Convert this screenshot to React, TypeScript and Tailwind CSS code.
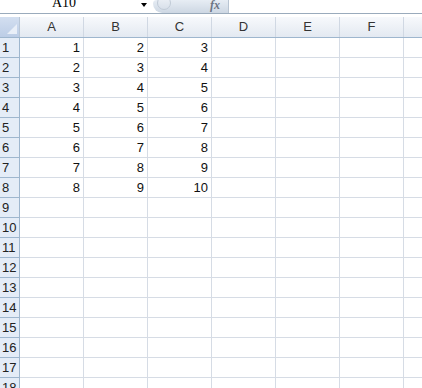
import React from 'react'

const columns = ['A', 'B', 'C', 'D', 'E', 'F', '']
const data: Record<number, number[]> = {
  1: [1, 2, 3],
  2: [2, 3, 4],
  3: [3, 4, 5],
  4: [4, 5, 6],
  5: [5, 6, 7],
  6: [6, 7, 8],
  7: [7, 8, 9],
  8: [8, 9, 10],
}

export default function App() {
  const rows = Array.from({ length: 18 }, (_, i) => i + 1)

  return (
    <div
      className="w-[422px] h-[388px] overflow-hidden bg-white text-[13px] text-[#111]"
      style={{ fontFamily: '"Liberation Sans", Arial, sans-serif' }}
    >
      {/* Formula bar, cut off at the top */}
      <div className="flex items-start h-[14px] overflow-hidden border-b border-[#9aabbc] bg-white">
        <div className="w-[141px] shrink-0 pl-[52px] -mt-[5px] text-[14px] leading-[16px] text-black" style={{ fontFamily: '"Liberation Serif", serif' }}>
          A10
        </div>
        <div className="mt-[3px] w-0 h-0 border-l-[3px] border-r-[3px] border-t-[4px] border-l-transparent border-r-transparent border-t-black" />
        <div className="ml-[6px] flex items-start justify-between w-[76px] h-[13px] overflow-hidden rounded-bl-[10px] rounded-tl-[4px] bg-gradient-to-b from-[#e7edf4] to-[#cdd7e3] border-r border-[#b8c4d2] pl-[4px] pr-[8px]">
          <div className="-mt-[4px] w-[14px] h-[14px] rounded-full border border-[#c0cad6] bg-gradient-to-b from-[#eef2f7] to-[#d8e0ea]" />
          <span className="-mt-[2px] italic font-bold text-[12px] leading-[14px] text-[#6c7584]" style={{ fontFamily: '"Liberation Serif", serif' }}>
            fx
          </span>
        </div>
      </div>

      <div className="h-[3px] bg-white" />

      {/* Column header */}
      <div className="flex h-[21px] border-b border-[#9eb6ce] bg-gradient-to-b from-[#f7f9fc] to-[#e3e9f1]">
        <div className="flex items-end justify-end w-[20px] shrink-0 border-r border-[#b8c6d6] bg-gradient-to-b from-[#d3dff0] to-[#bccde6] pr-[2px] pb-[3px]">
          <div className="w-0 h-0 border-l-[10px] border-b-[10px] border-l-transparent border-b-[#e9eff8]" />
        </div>
        {columns.map((c, i) => (
          <div key={i} className="w-[64px] shrink-0 border-r border-[#d0d8e3] flex items-center justify-center text-[#333]">
            {c}
          </div>
        ))}
      </div>

      {/* Rows */}
      {rows.map((r) => (
        <div key={r} className="flex h-[20px]">
          <div className="w-[20px] shrink-0 border-r border-b border-[#9eb6ce] bg-[#e4ecf7] pl-[2px] leading-[19px] text-[#222]">
            {r}
          </div>
          {columns.map((_, i) => (
            <div key={i} className="w-[64px] shrink-0 border-r border-b border-[#d6dce5] pr-[3px] text-right leading-[19px]">
              {data[r] && i < 3 ? data[r][i] : ''}
            </div>
          ))}
        </div>
      ))}
    </div>
  )
}
